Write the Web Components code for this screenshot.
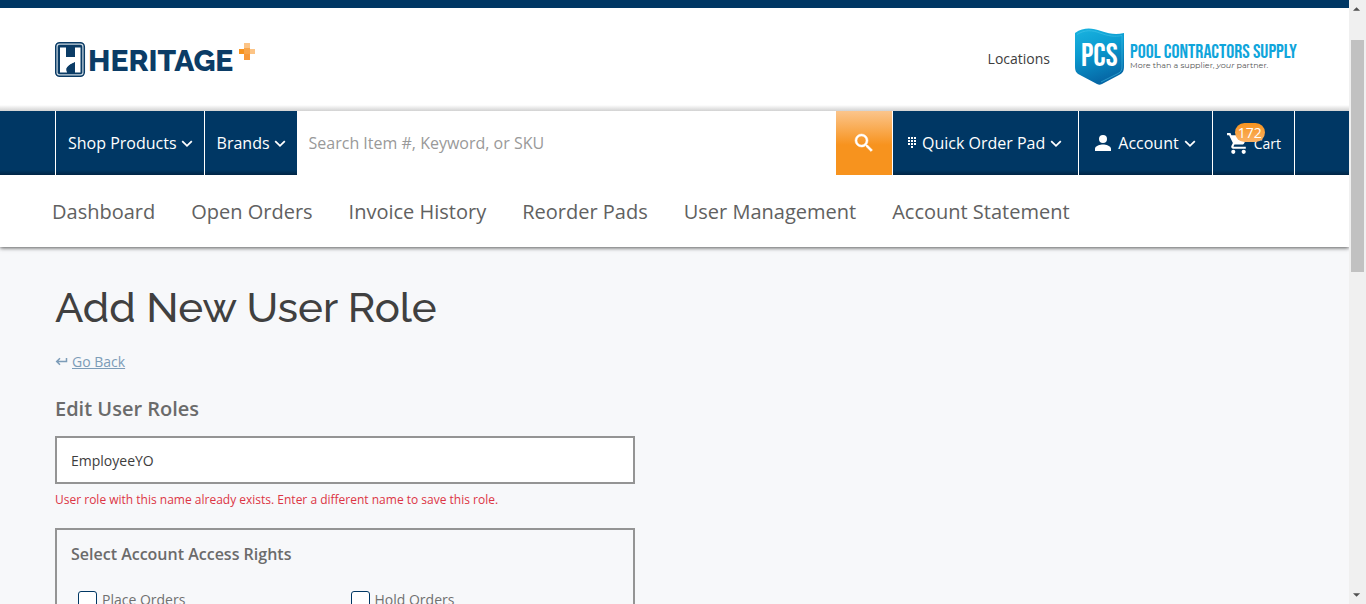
<!DOCTYPE html>
<html lang="en">
<head>
<meta charset="utf-8">
<title>Add New User Role</title>
<style>
  body { margin: 0; font-family: "Open Sans", "Noto Sans", sans-serif; color: #3d3d3d; background: #f7f8fa; }
</style>
</head>
<body>
<app-shell>
  <site-header slot="header"></site-header>
  <main-bar slot="header"></main-bar>
  <account-tabs slot="header"></account-tabs>
  <role-page></role-page>
</app-shell>

<script>
const define = (name, html) => customElements.define(name, class extends HTMLElement {
  constructor() {
    super();
    const t = document.createElement('template');
    t.innerHTML = '<style>*{box-sizing:border-box}a{color:inherit;text-decoration:none}button,input{font:inherit;color:inherit;margin:0}</style>' + html;
    this.attachShadow({ mode: 'open' }).append(t.content.cloneNode(true));
  }
});

define('chevron-icon', `
<style>:host{display:inline-flex;width:12px;height:12px}</style>
<svg width="12" height="12" viewBox="0 0 12 12" fill="none" stroke="currentColor" stroke-width="1.8"><path d="M1.2 4.2 6 8.8l4.800-4.600"/></svg>`);

define('scroll-track', `
<style>
  :host{display:flex;flex-direction:column;width:17px;flex:none;background:#f0f0f0;padding-right:2px}
  .cap{display:flex;justify-content:center;align-items:center;height:17px;flex:none}
  .track{flex:1;display:flex;flex-direction:column;padding:23px 0 0 2px}
  .thumb{height:42.4%;background:#c1c1c1}
</style>
<div class="cap"><svg width="9" height="5" viewBox="0 0 9 5" style="padding-left:1px"><path d="M0 5 4 1l4 4z" fill="#505050"/></svg></div>
<div class="track"><div class="thumb"></div></div>
<div class="cap"><svg width="9" height="5" viewBox="0 0 9 5" style="padding-left:1px"><path d="M0 0 4 4l4-4z" fill="#505050"/></svg></div>`);

define('app-shell', `
<style>
  :host{display:flex;height:100vh;overflow:hidden}
  .view{flex:1;min-width:0;overflow:hidden}
  header{position:relative;background:#fff;box-shadow:0 1px 4px rgba(0,0,0,.65)}
</style>
<div class="view"><header><slot name="header"></slot></header><slot></slot></div>
<scroll-track aria-hidden="true"></scroll-track>`);

define('heritage-logo', `
<style>:host{display:block}svg{display:block}</style>
<svg width="204" height="40" viewBox="0 0 204 40" role="img" aria-label="Heritage Plus">
  <rect x=".7" y="3.700" width="28.600" height="33.600" rx="4" fill="#c9d6e0" stroke="#0b3c66" stroke-width="1.500"/>
  <rect x="2.700" y="5.700" width="24.600" height="29.600" rx="2" fill="#0b3c66"/>
  <path d="M5 8.500h6V18h9V8.500h5.500v25H20v-10c-3 1-7 3-8.500 6l.5 4H5z" fill="#fff"/>
  <path d="M12 33c-2-4 1-7 8-10v10z" fill="#0b3c66"/>
  <text x="33" y="32" font-family="Raleway, Lato, sans-serif" font-weight="800" font-size="30" fill="#0b3c66">HERITAGE</text>
  <path d="M189 4h6v6h-6z" fill="#fcc486"/><path d="M184 10h5v5h-5z" fill="#f7931e"/><path d="M189 9h6v6h-6z" fill="#f9a54a"/><path d="M195 10h5v5h-5z" fill="#fcc486"/><path d="M189 15h6v6h-6z" fill="#f8993a"/>
</svg>`);

define('pcs-logo', `
<style>:host{display:block}svg{display:block;overflow:visible}text{font-family:"Bebas Neue",Oswald,"Roboto Condensed","Open Sans Condensed","DejaVu Sans Condensed",sans-serif}</style>
<svg width="221" height="62" viewBox="0 0 221 62" role="img" aria-label="Pool Contractors Supply">
  <defs><linearGradient id="g" x1="0" y1="0" x2=".3" y2="1"><stop offset="0" stop-color="#1ab4e0"/><stop offset=".45" stop-color="#0b9bd0"/><stop offset="1" stop-color="#0668a6"/></linearGradient></defs>
  <path d="M1 5C10-1 18 0 27 3c9 3 15 4 23 2v33c0 5-1 7-5 9L28 56c-2 1-3 1-5 0L6 47c-4-2-5-4-5-9z" fill="url(#g)"/>
  <path d="M3 6.500C11 1.500 18 2 26 5c8 3 15 4 22 2.500V38c0 4-1 6-4 7.500L27 54" fill="none" stroke="#4cc8ec" stroke-opacity=".5"/>
  <text x="7" y="38" font-size="32" fill="#fff">PCS</text>
  <text x="56" y="30" font-size="20" fill="#10a5db">POOL CONTRACTORS SUPPLY</text>
  <text x="56" y="40" font-size="8" fill="#555" style="font-family:Montserrat,Inter,sans-serif">More than a supplier, <tspan font-style="italic">your</tspan> partner.</text>
</svg>`);

define('site-header', `
<style>
  :host{display:block;border-top:8px solid #003764}
  .row{display:flex;align-items:center;height:103px;padding:0 54px 2px 55px;background:linear-gradient(#fff 97px,#d2d2d2)}
  .loc{margin-left:auto;margin-right:24px;font-size:14px;line-height:20px}
</style>
<div class="row"><a href="#"><heritage-logo></heritage-logo></a><a class="loc" href="#">Locations</a><a href="#"><pcs-logo></pcs-logo></a></div>`);

define('main-bar', `
<style>
  :host{display:flex;height:64px;padding:0 54px 0 55px;color:#fff;font-size:16px;background:linear-gradient(#003764 59px,#002544)}
  button,a{display:flex;align-items:center;background:none;border:0;border-left:1px solid #fff;padding:0 11px 0 12px;white-space:nowrap}
  .gap{gap:4px}
  form{flex:1;display:flex;min-width:0;background:#fff}
  input{flex:1;min-width:0;border:0;outline:0;padding:0 12px;background:#fff;color:#444}
  input::placeholder{color:#999;opacity:1}
  form button{width:56px;justify-content:center;padding:0;border:0;background:linear-gradient(#fbc58c,#f7931e 34px)}
  .pad{padding:0 16px 0 14px;gap:5px}
  .cart{position:relative;padding:0 13px;border-right:1px solid #fff;font-size:14px;gap:3px}
  .badge{position:absolute;left:22px;top:12px;height:19px;line-height:19px;padding:0 3px;border-radius:10px;background:linear-gradient(#f7931e,#fbb367);font-size:14px}
</style>
<button type="button" class="gap">Shop Products <chevron-icon></chevron-icon></button>
<button type="button" class="gap">Brands <chevron-icon></chevron-icon></button>
<form role="search"><input type="search" aria-label="Search" placeholder="Search Item #, Keyword, or SKU">
<button type="button" aria-label="Search"><svg width="24" height="24" viewBox="0 0 24 24" fill="#fff" stroke="#fff" stroke-width=".5"><path d="M15.500 14h-.79l-.28-.27A6.470 6.470 0 0 0 16 9.500 6.500 6.500 0 1 0 9.500 16c1.610 0 3.090-.59 4.230-1.570l.27.28v.79l5 4.990L20.490 19zm-6 0a4.500 4.500 0 1 1 0-9 4.500 4.500 0 0 1 0 9z"/></svg></button></form>
<button type="button" class="pad"><svg width="10" height="14" viewBox="0 0 10 14" fill="#fff"><path d="M1 1h2v2H1zm3 0h2v2H4zm3 0h2v2H7zM1 4h2v2H1zm3 0h2v2H4zm3 0h2v2H7zM1 7h2v2H1zm3 0h2v2H4zm3 0h2v2H7zM4 10h2v2H4z"/></svg>Quick Order Pad <chevron-icon></chevron-icon></button>
<button type="button" class="pad"><svg width="20" height="20" viewBox="0 0 20 20" fill="#fff"><path d="M10 10a4 4 0 1 0 0-8 4 4 0 0 0 0 8zm0 1.500c-2.700 0-8 1.400-8 4.200V18h16v-2.300c0-2.800-5.300-4.200-8-4.200z"/></svg>Account <chevron-icon></chevron-icon></button>
<a href="#" class="cart"><svg width="25" height="25" viewBox="0 0 24 24" fill="#fff"><path d="M7 18a2 2 0 1 0 0 4 2 2 0 0 0 0-4zM1 2v2h2l3.600 7.590-1.350 2.450C4.500 15.400 5.500 17 7 17h12v-2H7.420l-.22-.25L8.100 13h7.450c.75 0 1.410-.41 1.750-1.030l3.580-6.490A1 1 0 0 0 20 4H5.210l-.94-2z"/><circle cx="17" cy="20" r="2"/></svg>Cart<span class="badge">172</span></a>`);

define('account-tabs', `
<style>
  :host{display:block}
  nav{display:flex;align-items:center;gap:36px;height:72px;padding:0 52px;font-size:20px;color:#616161;white-space:nowrap}
</style>
<nav aria-label="Account"><a href="#">Dashboard</a><a href="#">Open Orders</a><a href="#">Invoice History</a><a href="#">Reorder Pads</a><a href="#">User Management</a><a href="#">Account Statement</a></nav>`);

define('check-item', `
<style>
  :host{display:block}
  label{display:flex;align-items:center;gap:5px;font-size:14px;line-height:20px;color:#707070}
  input{appearance:none;width:19px;height:19px;border:1px solid #003764;border-radius:3px;background:#fff}
</style>
<label><input type="checkbox"><slot></slot></label>`);

define('role-page', `
<style>
  :host{display:block;padding:33px 55px}
  h1,h2,h3,p{margin:0}
  h1{font:500 42px/56px Raleway,Inter,sans-serif;color:#404040}
  .back{display:flex;align-items:center;gap:4px;width:max-content;margin-top:16px;font-size:14px;line-height:20px;color:#7c9cb8}
  .back span{text-decoration:underline}
  form{width:50%;max-width:580px;margin-top:23px}
  h2{font-size:20px;line-height:28px;font-weight:600;color:#6b6b6b}
  .name{display:block;width:100%;height:48px;margin-top:13px;padding:0 14px;border:2px solid #949494;background:#fff;font-size:14px}
  .err{margin-top:6px;font-size:12px;line-height:20px;color:#dc3545}
  section{margin-top:18px;padding:12px 14px 24px;border:2px solid #949494}
  h3{font-size:16px;line-height:24px;font-weight:600;color:#6b6b6b}
  .grid{display:grid;grid-template-columns:1fr 1fr;gap:4px;padding:24px 0 0 7px}
</style>
<h1>Add New User Role</h1>
<a class="back" href="#"><svg width="13" height="12" viewBox="0 0 13 12" fill="none" stroke="currentColor" stroke-width="1.500"><path d="M11.500 2v3.500H2M5 2.300 1.700 5.500 5 8.700"/></svg><span>Go Back</span></a>
<form>
  <h2><label for="name">Edit User Roles</label></h2>
  <input class="name" id="name" type="text" value="EmployeeYO" aria-describedby="err">
  <p class="err" id="err">User role with this name already exists. Enter a different name to save this role.</p>
  <section><h3>Select Account Access Rights</h3>
    <div class="grid"><check-item>Place Orders</check-item><check-item>Hold Orders</check-item></div></section>
</form>`);
</script>
</body>
</html>
